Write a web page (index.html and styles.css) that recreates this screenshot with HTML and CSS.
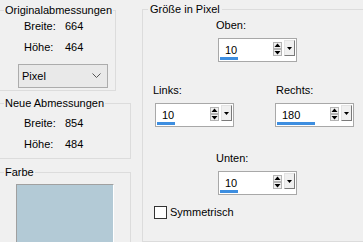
FILE: index.html
```html
<!DOCTYPE html>
<html lang="de">
  <head>
    <meta charset="UTF-8" />
    <title>Leinwandgröße</title>
    <link rel="stylesheet" href="styles.css">
  </head>
  <body>
    <div class="dialog">
      <div class="side">
        <fieldset class="group group-orig">
          <legend>Originalabmessungen</legend>
          <div class="dim-row"><span class="dim-label">Breite:</span><span>664</span></div>
          <div class="dim-row"><span class="dim-label">Höhe:</span><span>464</span></div>
          <div class="select">
            <span>Pixel</span>
            <svg width="9" height="6" viewBox="0 0 9 6"><polyline points="0.5,0.5 4.5,4.5 8.5,0.5" fill="none" stroke="#555" stroke-width="1"/></svg>
          </div>
        </fieldset>

        <fieldset class="group group-new">
          <legend>Neue Abmessungen</legend>
          <div class="dim-row"><span class="dim-label">Breite:</span><span>854</span></div>
          <div class="dim-row"><span class="dim-label">Höhe:</span><span>484</span></div>
        </fieldset>

        <fieldset class="group group-color">
          <legend>Farbe</legend>
          <div class="swatch"></div>
        </fieldset>
      </div>

      <fieldset class="group group-size">
        <legend>Größe in Pixel</legend>

        <div class="field field-top">
          <label>Oben:</label>
          <div class="spin">
            <div class="spin-field">
              <span class="spin-value">10</span>
              <span class="spin-bar" style="width: 18px"></span>
            </div>
            <div class="spin-arrows">
              <span class="spin-btn"><svg width="7" height="5" viewBox="0 0 7 5"><polygon points="3.5,0.5 6.5,4 0.5,4" fill="#000"/></svg></span>
              <span class="spin-btn"><svg width="7" height="5" viewBox="0 0 7 5"><polygon points="0.5,1 6.5,1 3.5,4.5" fill="#000"/></svg></span>
            </div>
            <span class="spin-drop"><svg width="5" height="3" viewBox="0 0 5 3"><polygon points="0,0 5,0 2.5,3" fill="#000"/></svg></span>
          </div>
        </div>

        <div class="field-pair">
          <div class="field field-left">
            <label>Links:</label>
            <div class="spin">
              <div class="spin-field">
                <span class="spin-value">10</span>
                <span class="spin-bar" style="width: 18px"></span>
              </div>
              <div class="spin-arrows">
                <span class="spin-btn"><svg width="7" height="5" viewBox="0 0 7 5"><polygon points="3.5,0.5 6.5,4 0.5,4" fill="#000"/></svg></span>
                <span class="spin-btn"><svg width="7" height="5" viewBox="0 0 7 5"><polygon points="0.5,1 6.5,1 3.5,4.5" fill="#000"/></svg></span>
              </div>
              <span class="spin-drop"><svg width="5" height="3" viewBox="0 0 5 3"><polygon points="0,0 5,0 2.5,3" fill="#000"/></svg></span>
            </div>
          </div>
          <div class="field field-right">
            <label>Rechts:</label>
            <div class="spin">
              <div class="spin-field">
                <span class="spin-value">180</span>
                <span class="spin-bar" style="width: 38px"></span>
              </div>
              <div class="spin-arrows">
                <span class="spin-btn"><svg width="7" height="5" viewBox="0 0 7 5"><polygon points="3.5,0.5 6.5,4 0.5,4" fill="#000"/></svg></span>
                <span class="spin-btn"><svg width="7" height="5" viewBox="0 0 7 5"><polygon points="0.5,1 6.5,1 3.5,4.5" fill="#000"/></svg></span>
              </div>
              <span class="spin-drop"><svg width="5" height="3" viewBox="0 0 5 3"><polygon points="0,0 5,0 2.5,3" fill="#000"/></svg></span>
            </div>
          </div>
        </div>

        <div class="field field-bottom">
          <label>Unten:</label>
          <div class="spin">
            <div class="spin-field">
              <span class="spin-value">10</span>
              <span class="spin-bar" style="width: 18px"></span>
            </div>
            <div class="spin-arrows">
              <span class="spin-btn"><svg width="7" height="5" viewBox="0 0 7 5"><polygon points="3.5,0.5 6.5,4 0.5,4" fill="#000"/></svg></span>
              <span class="spin-btn"><svg width="7" height="5" viewBox="0 0 7 5"><polygon points="0.5,1 6.5,1 3.5,4.5" fill="#000"/></svg></span>
            </div>
            <span class="spin-drop"><svg width="5" height="3" viewBox="0 0 5 3"><polygon points="0,0 5,0 2.5,3" fill="#000"/></svg></span>
          </div>
        </div>

        <label class="check"><span class="check-box"></span>Symmetrisch</label>
      </fieldset>
    </div>
  </body>
</html>
```

FILE: styles.css
```css
* {
  box-sizing: border-box;
}

body {
  margin: 0;
  background-color: #f0f0f0;
  font-family: "Liberation Sans", Arial, sans-serif;
  font-size: 11px;
  line-height: 14px;
  color: #000;
  overflow: hidden;
}

.dialog {
  display: flex;
  height: 242px;
  overflow: hidden;
}

/* left column */
.side {
  flex: none;
  width: 137px;
  margin-left: -6px;
  display: flex;
  flex-direction: column;
}

.group {
  margin: 0;
  padding: 0;
  min-width: 0;
  border: 1px solid #dcdcdc;
}

.group legend {
  margin-left: 9px;
  padding: 0 1px;
  line-height: 14px;
}

.group-orig {
  width: 122px;
  margin-top: 3px;
  padding-bottom: 2px;
}

.group-new {
  width: 137px;
  margin-top: 5px;
  padding-bottom: 7px;
}

.group-color {
  width: 137px;
  margin-top: 6px;
  flex: 1;
}

.dim-row {
  display: flex;
  padding-left: 29px;
  margin-top: 7px;
}

.group-orig .dim-row:first-of-type {
  margin-top: 2px;
}

.group-new .dim-row:first-of-type {
  margin-top: 6px;
}

.dim-label {
  width: 41px;
}

.select {
  display: flex;
  align-items: center;
  justify-content: space-between;
  width: 90px;
  height: 24px;
  margin: 10px 0 0 23px;
  padding: 0 6px 0 3px;
  border: 1px solid #acacac;
  background-color: #e9e9e9;
}

.swatch {
  width: 98px;
  height: 80px;
  margin: 5px 0 0 21px;
  border: 1px solid;
  border-color: #a0a0a0 #ffffff #ffffff #a0a0a0;
  background-color: #b3cad6;
}

/* size group */
.group-size {
  flex: 1;
  margin: 2px -10px 0 11px;
}

.group-size legend {
  margin-left: 5px;
  padding: 0 2px;
}

.field label {
  display: block;
}

.field .spin {
  margin-top: 6px;
}

.field-top {
  margin: 2px 0 0 73px;
}

.field-top .spin,
.field-bottom .spin,
.field-left .spin {
  margin-left: 2px;
}

.field-pair {
  display: flex;
  margin: 21px 0 0 10px;
}

.field-right {
  margin-left: 42px;
}

.field-right .spin {
  margin-left: -1px;
}

.field-bottom {
  margin: 24px 0 0 73px;
}

.spin {
  display: flex;
  width: 79px;
  height: 24px;
  padding: 1px 1px 0 1px;
  border: 1px solid #a8a8a8;
  background-color: #fff;
}

.spin-field {
  flex: 1;
  display: flex;
  flex-direction: column;
}

.spin-value {
  margin-top: 3px;
  padding-left: 5px;
}

.spin-bar {
  height: 3px;
  background-color: #3d8ee0;
}

.spin-arrows {
  display: flex;
  flex-direction: column;
  margin-top: 2px;
}

.spin-btn {
  display: flex;
  align-items: center;
  justify-content: center;
  width: 9px;
  height: 7px;
  border: 1px solid #b4b4b4;
  background-color: #f0f0f0;
}

.spin-drop {
  display: flex;
  align-items: center;
  justify-content: center;
  width: 11px;
  height: 16px;
  margin-left: 2px;
  border: 1px solid;
  border-color: #e3e3e3 #7a7a7a #7a7a7a #e3e3e3;
  background-color: #f0f0f0;
}

.check {
  display: flex;
  align-items: center;
  margin: 10px 0 0 11px;
}

.check-box {
  width: 13px;
  height: 13px;
  margin-right: 3px;
  border: 1px solid #333;
  background-color: #fff;
}
```
